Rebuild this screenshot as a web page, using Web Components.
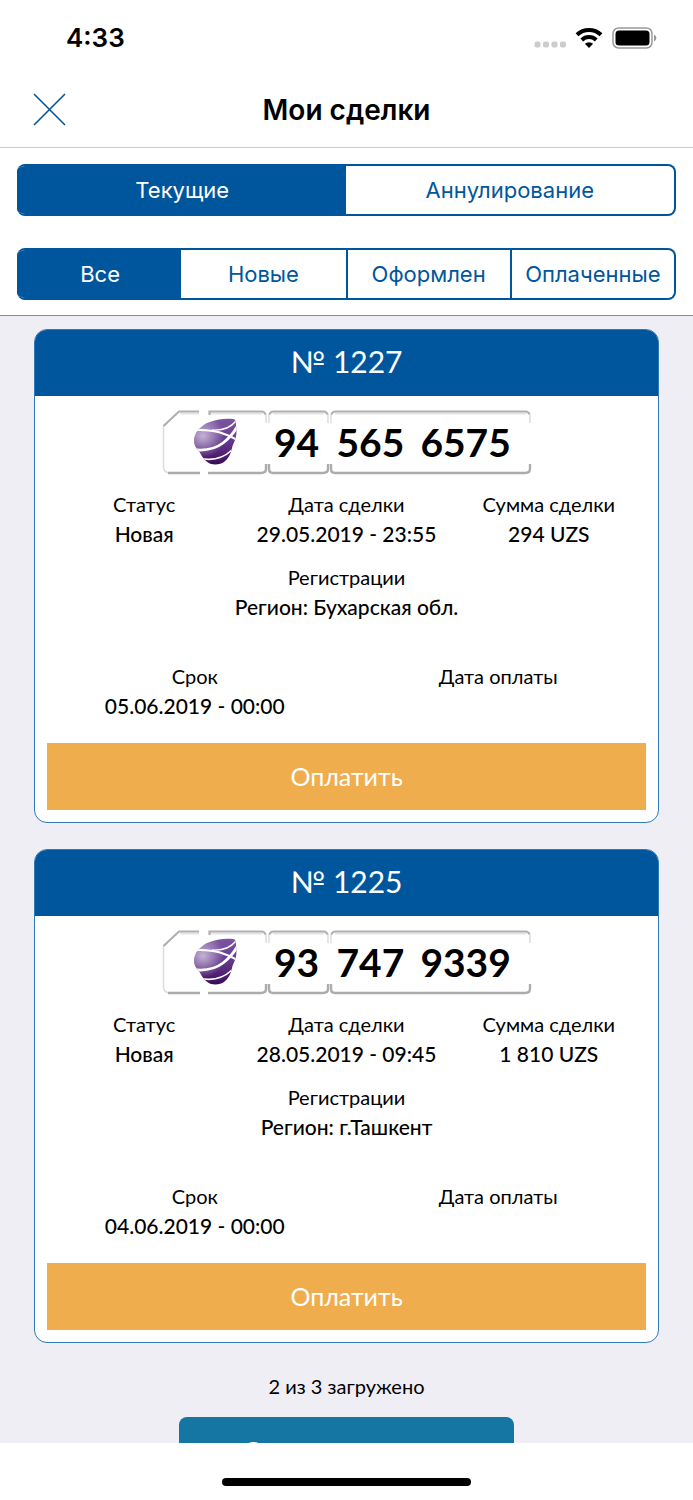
<!DOCTYPE html>
<html lang="ru">
<head>
<meta charset="UTF-8">
<meta name="viewport" content="width=device-width, initial-scale=1">
<title>Мои сделки</title>
<style>
  body {
    margin: 0;
    background: #fff;
    color: #000;
    font-family: Lato, "Open Sans", sans-serif;
  }
</style>
</head>
<body>
<deals-app></deals-app>

<script>
const BASE = `
  * { box-sizing: border-box; }
  button { font: inherit; margin: 0; padding: 0; border: 0; background: none; cursor: pointer; }
`;

class StatusBar extends HTMLElement {
  connectedCallback() {
    this.attachShadow({ mode: 'open' }).innerHTML = `
      <style>
        ${BASE}
        :host {
          display: flex;
          align-items: center;
          justify-content: space-between;
          height: 76px;
          padding: 0 36px 0 66px;
          font: 600 26px/32px Inter, sans-serif;
        }
        .icons { display: flex; align-items: center; gap: 9px; }
        svg { display: block; }
      </style>
      <span>4:33</span>
      <div class="icons">
        <svg width="32" height="22" viewBox="0 0 32 22" fill="#ccc">
          <rect x="0.5" y="14.5" width="6" height="6" rx="2"/>
          <rect x="9" y="14.5" width="6" height="6" rx="2"/>
          <rect x="17.5" y="14.5" width="6" height="6" rx="2"/>
          <rect x="26" y="14.5" width="6" height="6" rx="2"/>
        </svg>
        <svg width="28" height="22" viewBox="0 0 28 22">
          <path d="M2 7.8a17.2 17.2 0 0 1 24 0M6.8 13a10.4 10.4 0 0 1 14.4 0" fill="none" stroke="#000" stroke-width="4"/>
          <path d="M9.9 16.8a6 6 0 0 1 8.2 0L14 21z"/>
        </svg>
        <svg width="45" height="22" viewBox="0 0 45 22">
          <rect x="1" y="1" width="39" height="20" rx="5.5" fill="none" stroke="#999" stroke-width="1.5"/>
          <rect x="3.5" y="3.5" width="34" height="15" rx="3.5"/>
          <path d="M42 7.5q2.4 1 2.4 3.5t-2.4 3.5z" fill="#999"/>
        </svg>
      </div>
    `;
  }
}

class NavBar extends HTMLElement {
  connectedCallback() {
    this.attachShadow({ mode: 'open' }).innerHTML = `
      <style>
        ${BASE}
        :host {
          display: grid;
          grid-template-columns: 34px 1fr 34px;
          align-items: center;
          box-sizing: border-box;
          height: 72px;
          padding: 0 32px 3px;
          border-bottom: 1px solid #ccc;
        }
        h1 { margin: 0; text-align: center; font: 600 28px/36px Inter, sans-serif; }
        svg { display: block; }
      </style>
      <button type="button" aria-label="Закрыть">
        <svg width="34" height="34" viewBox="0 0 34 34" fill="none" stroke="#00569c" stroke-width="1.6">
          <path d="M2 1l31 31M33 1L2 32"/>
        </svg>
      </button>
      <h1><slot></slot></h1>
    `;
  }
}

class SegmentedControl extends HTMLElement {
  connectedCallback() {
    this._items = this.getAttribute('items').split(',');
    this._selected = 0;
    this.attachShadow({ mode: 'open' });
    this.render();
    this.shadowRoot.addEventListener('click', (e) => {
      const button = e.target.closest('button');
      if (!button) return;
      this._selected = Number(button.dataset.index);
      this.render();
    });
  }

  render() {
    this.shadowRoot.innerHTML = `
      <style>
        ${BASE}
        :host {
          display: grid;
          grid-auto-flow: column;
          grid-auto-columns: minmax(0, 1fr);
          box-sizing: border-box;
          height: 52px;
          overflow: hidden;
          border: 2px solid #00569c;
          border-left: 0;
          border-radius: 8px;
        }
        button { border-left: 2px solid #00569c; color: #00569c; font: 400 22px/28px Inter, sans-serif; }
        button[aria-pressed="true"] { background: #00569c; color: #fff; }
        button[aria-pressed="true"] + button { border-left: 0; }
      </style>
      ${this._items.map((item, i) => `
        <button type="button" data-index="${i}" aria-pressed="${i === this._selected}">${item}</button>
      `).join('')}
    `;
  }
}

class NumberPlate extends HTMLElement {
  connectedCallback() {
    const [code, ...rest] = this.getAttribute('number').split(' ');
    this.attachShadow({ mode: 'open' }).innerHTML = `
      <style>
        ${BASE}
        :host { display: grid; width: 370px; margin: 0 auto; }
        :host > * { grid-area: 1 / 1; }
        .frame { display: block; }
        .content {
          display: grid;
          grid-template-columns: 105px 60px 1fr;
          align-items: center;
          font-size: 39px;
          line-height: 66px;
          font-weight: 700;
        }
        .logo { display: block; justify-self: end; margin-right: 29px; }
        .code { text-align: center; }
        .rest { display: flex; gap: 16px; padding-left: 10px; }
      </style>
      <svg class="frame" width="370" height="66" viewBox="0 0 370 66" fill="none">
        <g stroke="#dedede" stroke-width="1.6">
          <path d="M1.5 16v43q1 4 5 5M104 5v9M107 5v9M166 5v9M169 5v9M368 6v8"/>
        </g>
        <g stroke="#e4e4e4" stroke-width="2">
          <path d="M18 4.5h19M48 4.5h52M111 4.5h51M173 4.5h191"/>
        </g>
        <g stroke="#b0b0b0" stroke-width="2.2">
          <path d="M1.5 17L17 2.5h20M47.5 6V2.5h52q3 0 4 3M107.5 5.5q1-3 4-3h50q3 0 4 3M169.5 5.5q1-3 4-3h190q3 0 4 3"/>
        </g>
        <g stroke="#acacac" stroke-width="2.4">
          <path d="M6 64h32M46 64h53q5 0 5-4v-5M107 55v5q0 4 4 4h50q5 0 5-4v-5M169 55v5q0 4 4 4h190q5 0 5-4v-5"/>
        </g>
      </svg>
      <div class="content">
        <svg class="logo" width="44" height="48" viewBox="0 0 44 48">
          <defs>
            <linearGradient id="ball" x1="0" y1="0" x2="0" y2="1">
              <stop offset="0" stop-color="#7d57a2"/>
              <stop offset=".5" stop-color="#63378b"/>
              <stop offset=".8" stop-color="#4d1c70"/>
              <stop offset="1" stop-color="#340650"/>
            </linearGradient>
            <radialGradient id="shine" gradientUnits="userSpaceOnUse" cx="9" cy="18" r="22">
              <stop offset="0" stop-color="#fff" stop-opacity=".6"/>
              <stop offset="1" stop-color="#fff" stop-opacity="0"/>
            </radialGradient>
            <clipPath id="shape">
              <path d="M0 23C0 15 6 9 13 5 22 1 32 0 39 1 42 1.500 42 4 42 8 42.800 13 42.500 18 41 22 40 25 38.500 27 38 30 37 36 34 41 30 44 26 47 17 48 12 43 9 40 7 37 5 33 2 30 0 27 0 23z"/>
            </clipPath>
          </defs>
          <g clip-path="url(#shape)">
            <path d="M0 0h44v48H0z" fill="url(#ball)"/>
            <path d="M0 0h44v48H0z" fill="url(#shine)"/>
            <g fill="none" stroke="#fff">
              <path d="M2 12Q16 11.5 26 14.500T43 22" stroke-width="2"/>
              <path d="M-1 31.5Q17 34 29 25Q38 18 43 9" stroke-width="2.8"/>
              <path d="M18 12Q34 13 42 3" stroke-width="1.4"/>
              <path d="M5 40Q24 45 38 32" stroke-width="1.6"/>
            </g>
          </g>
        </svg>
        <span class="code">${code}</span>
        <span class="rest">${rest.map((part) => `<span>${part}</span>`).join('')}</span>
      </div>
    `;
  }
}

class DealField extends HTMLElement {
  connectedCallback() {
    this.attachShadow({ mode: 'open' }).innerHTML = `
      <style>
        ${BASE}
        :host { display: block; min-height: 60px; text-align: center; font-size: 20px; line-height: 30px; }
        .value { font-size: 21px; font-weight: 500; white-space: nowrap; }
      </style>
      <div>${this.getAttribute('label')}</div>
      <div class="value"><slot></slot></div>
    `;
  }
}

class DealCard extends HTMLElement {
  connectedCallback() {
    const deal = this.deal;
    this.attachShadow({ mode: 'open' }).innerHTML = `
      <style>
        ${BASE}
        :host {
          display: block;
          overflow: hidden;
          background: #fff;
          border: 1px solid #2f7ab5;
          border-radius: 13px;
        }
        h2 {
          margin: 0 0 13px;
          padding-bottom: 4px;
          background: #00569c;
          color: #fff;
          text-align: center;
          font-size: 30px;
          line-height: 62px;
          font-weight: 400;
        }
        .row { display: grid; grid-auto-flow: column; grid-auto-columns: minmax(0, 1fr); padding: 0 8px; }
        .main { margin-top: 14px; }
        .region { margin-top: 13px; }
        .dates { margin-top: 39px; }
        .pay-wrap { padding: 22px 12px 12px; }
        .pay { display: block; width: 100%; background: #f0ad4e; color: #fff; font-size: 25px; line-height: 67px; }
      </style>
      <h2>№ ${deal.id}</h2>
      <number-plate number="${deal.number}"></number-plate>
      <div class="row main">
        <deal-field label="Статус">${deal.status}</deal-field>
        <deal-field label="Дата сделки">${deal.date}</deal-field>
        <deal-field label="Сумма сделки">${deal.sum}</deal-field>
      </div>
      <div class="row region">
        <deal-field label="Регистрации">Регион: ${deal.region}</deal-field>
      </div>
      <div class="row dates">
        <deal-field label="Срок">${deal.deadline}</deal-field>
        <deal-field label="Дата оплаты">${deal.paid}</deal-field>
      </div>
      <div class="pay-wrap"><button class="pay" type="button">Оплатить</button></div>
    `;
  }
}

class DealList extends HTMLElement {
  connectedCallback() {
    const deals = [
      {
        id: 1227, number: '94 565 6575', status: 'Новая', date: '29.05.2019 - 23:55',
        sum: '294 UZS', region: 'Бухарская обл.', deadline: '05.06.2019 - 00:00', paid: ''
      },
      {
        id: 1225, number: '93 747 9339', status: 'Новая', date: '28.05.2019 - 09:45',
        sum: '1 810 UZS', region: 'г.Ташкент', deadline: '04.06.2019 - 00:00', paid: ''
      }
    ];
    this.attachShadow({ mode: 'open' }).innerHTML = `
      <style>
        ${BASE}
        :host { display: block; padding: 13px 34px; background: #efeef4; }
        .cards { display: grid; gap: 26px; }
        p { margin: 28px 0 16px; text-align: center; font-size: 20px; line-height: 30px; }
        .more {
          display: block;
          width: 335px;
          margin: 0 auto;
          border-radius: 8px;
          background: #1576a3;
          color: #fff;
          font-size: 30px;
          line-height: 70px;
        }
      </style>
      <div class="cards"></div>
      <p>2 из 3 загружено</p>
      <button class="more" type="button">Загрузить еще</button>
    `;
    const cards = this.shadowRoot.querySelector('.cards');
    deals.forEach((deal) => {
      const card = document.createElement('deal-card');
      card.deal = deal;
      cards.appendChild(card);
    });
  }
}

class DealsApp extends HTMLElement {
  connectedCallback() {
    this.attachShadow({ mode: 'open' }).innerHTML = `
      <style>
        ${BASE}
        :host { display: flex; flex-direction: column; height: 100vh; }
        .filters {
          display: grid;
          gap: 32px;
          padding: 16px 17px 15px;
          border-bottom: 1px solid #8a8a8e;
        }
        deal-list { flex: 1; min-height: 0; overflow-y: auto; scrollbar-width: none; }
        footer { display: flex; justify-content: center; padding: 35px 0 14px; }
        .home { width: 36%; height: 8px; border-radius: 4px; background: #000; }
      </style>
      <status-bar></status-bar>
      <nav-bar>Мои сделки</nav-bar>
      <div class="filters">
        <segmented-control items="Текущие,Аннулирование"></segmented-control>
        <segmented-control items="Все,Новые,Оформлен,Оплаченные"></segmented-control>
      </div>
      <deal-list></deal-list>
      <footer><div class="home"></div></footer>
    `;
  }
}

customElements.define('status-bar', StatusBar);
customElements.define('nav-bar', NavBar);
customElements.define('segmented-control', SegmentedControl);
customElements.define('number-plate', NumberPlate);
customElements.define('deal-field', DealField);
customElements.define('deal-card', DealCard);
customElements.define('deal-list', DealList);
customElements.define('deals-app', DealsApp);
</script>
</body>
</html>
